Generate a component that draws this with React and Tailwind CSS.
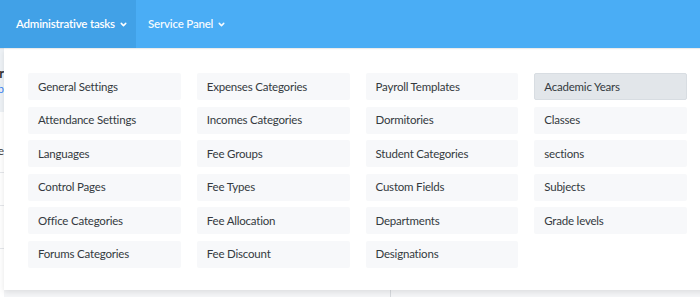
import React from 'react';
import { ChevronDown } from 'lucide-react';

const columns = [
  ['General Settings', 'Attendance Settings', 'Languages', 'Control Pages', 'Office Categories', 'Forums Categories'],
  ['Expenses Categories', 'Incomes Categories', 'Fee Groups', 'Fee Types', 'Fee Allocation', 'Fee Discount'],
  ['Payroll Templates', 'Dormitories', 'Student Categories', 'Custom Fields', 'Departments', 'Designations'],
  ['Academic Years', 'Classes', 'sections', 'Subjects', 'Grade levels'],
];

const App = () => {
  const active = 'Academic Years';

  return (
    <div className="relative w-[700px] h-[297px] overflow-hidden bg-[#f4f5f7] font-['Lato',sans-serif]">
      {/* Top nav */}
      <nav className="relative z-20 flex h-[48px] bg-[#4aadf5] shadow-[0_1px_1px_rgba(0,0,0,0.08)]">
        <button className="flex items-center gap-[4px] w-[136px] pl-[16px] bg-[#41a1e7] text-white text-[11.5px] tracking-[-0.2px] font-semibold">
          Administrative tasks
          <ChevronDown className="w-[9px] h-[9px]" strokeWidth={4} />
        </button>
        <button className="flex items-center gap-[4px] pl-[12px] text-white/95 text-[11.5px] tracking-[-0.2px] font-semibold">
          Service Panel
          <ChevronDown className="w-[9px] h-[9px]" strokeWidth={4} />
        </button>
      </nav>

      {/* Page underneath */}
      <div className="flex">
        <div className="w-[40px] ml-[-36px] flex flex-col">
          <div className="h-[64px] bg-[#eef2f6] pt-[16px] text-right">
            <div className="text-[13px] font-bold text-[#333] leading-[18px]">r</div>
            <div className="text-[11px] text-[#3b82f6] leading-[14px]">b</div>
          </div>
          <div className="h-[60px] bg-white pt-[30px] text-right text-[12px] text-[#444]">Pe</div>
          <div className="h-[33px] bg-white border-t border-[#e5e7eb]"></div>
          <div className="h-[43px] bg-white border-t border-[#e5e7eb]"></div>
          <div className="h-[50px] bg-white border-t border-[#e5e7eb]"></div>
        </div>
        <div className="flex-1 flex">
          <div className="w-[386px]"></div>
          <div className="flex-1 border-l border-[#d6d9dd] h-[249px]"></div>
        </div>
      </div>

      {/* Dropdown menu */}
      <div className="absolute z-10 left-[4px] top-[48px] w-[720px] h-[242px] bg-white shadow-[0_2px_6px_rgba(0,0,0,0.1)] pl-[24px] pt-[25px]">
        <div className="grid grid-cols-4 w-[659px] gap-x-[16px]">
          {columns.map((col, i) => (
            <div key={i} className="flex flex-col gap-[6.5px]">
              {col.map(item => (
                <div
                  key={item}
                  className={`h-[27px] flex items-center rounded-[2px] text-[11.5px] tracking-[-0.2px] text-[#343a40] ${
                    item === active ? 'bg-[#e2e6ea] border border-[#d8dde2] pl-[9px]' : 'bg-[#f7f8fa] pl-[10px]'
                  }`}
                >
                  {item}
                </div>
              ))}
            </div>
          ))}
        </div>
      </div>
    </div>
  );
};

export default App;
